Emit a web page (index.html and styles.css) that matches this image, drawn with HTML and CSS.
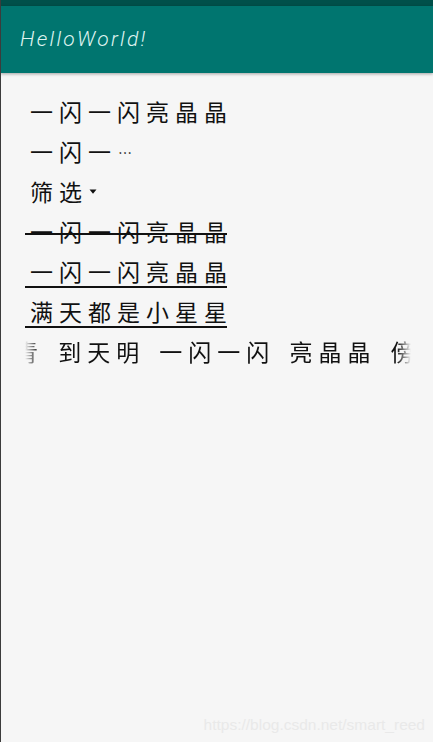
FILE: index.html
```html
<!DOCTYPE html>
<html lang="zh-CN">
<head>
<meta charset="utf-8">
<title>HelloWorld!</title>
<link rel="stylesheet" href="styles.css">
</head>
<body>
<div class="screen">
  <div class="status-bar"></div>
  <header class="toolbar"><h1 class="title">HelloWorld!</h1></header>
  <main class="content">
    <div class="row"><span class="label">一闪一闪亮晶晶</span></div>
    <div class="row"><span class="label">一闪一<span class="ellipsis">…</span></span></div>
    <div class="row"><span class="label short">筛选</span><svg class="caret" viewBox="0 0 8 5" aria-hidden="true"><path d="M0.5 0.5H7.5L4 4.8Z"/></svg></div>
    <div class="row"><span class="label strike">一闪一闪亮晶晶</span></div>
    <div class="row"><span class="label underline">一闪一闪亮晶晶</span></div>
    <div class="row"><span class="label underline">满天都是小星星</span></div>
    <div class="row marquee"><span class="marquee-text">青 到天明 一闪一闪 亮晶晶 傍</span></div>
  </main>
  <div class="watermark">https://blog.csdn.net/smart_reed</div>
</div>
</body>
</html>
```
FILE: styles.css
```css
* { box-sizing: border-box; }
html, body { margin: 0; height: 100%; }
body { font-family: "Noto Sans CJK SC", "Noto Sans", sans-serif; background: #f6f6f6; }
.screen { position: relative; height: 742px; overflow: hidden; border-left: 1px solid #3c3c3c; background: #f6f6f6; }
.status-bar { height: 6px; background: #00504a; margin-left: -1px; }
.toolbar { height: 67px; margin-left: -1px; padding-left: 20px; display: flex; align-items: center; background: #00756f; box-shadow: 0 1px 3px rgba(0,0,0,.35); }
.title { margin: 0; font: italic 300 21px/1 "Roboto", sans-serif; letter-spacing: 2.3px; color: #dff3f0; }
.content { padding: 19px 0 0 24px; }
.row { height: 40px; display: flex; align-items: flex-start; color: #111; font-size: 23px; font-weight: 400; letter-spacing: 6px; }
.label { position: relative; display: block; height: 36px; line-height: 38px; width: 202px; padding-left: 5px; white-space: nowrap; }
.label.short { width: auto; }
.ellipsis { font-size: 14px; letter-spacing: 0; margin-left: 1px; vertical-align: 3px; }
.caret { width: 8px; height: 5px; fill: #111; margin: 17px 0 0 1px; }
.strike::after { content: ""; position: absolute; left: 0; right: 0; top: 21px; height: 2px; background: #111; }
.underline { border-bottom: 2px solid #111; }
.marquee { width: 386px; height: 40px; line-height: 38px; overflow: hidden; white-space: pre; word-spacing: 3px; -webkit-mask-image: linear-gradient(90deg, transparent 0, #000 14px, #000 372px, transparent 100%); mask-image: linear-gradient(90deg, transparent 0, #000 14px, #000 372px, transparent 100%); }
.marquee-text { margin-left: -10px; flex: none; }
.watermark { position: absolute; right: 8px; bottom: 7px; font: 15.5px/1.2 "Liberation Sans", sans-serif; color: #e9e9e9; }
```
